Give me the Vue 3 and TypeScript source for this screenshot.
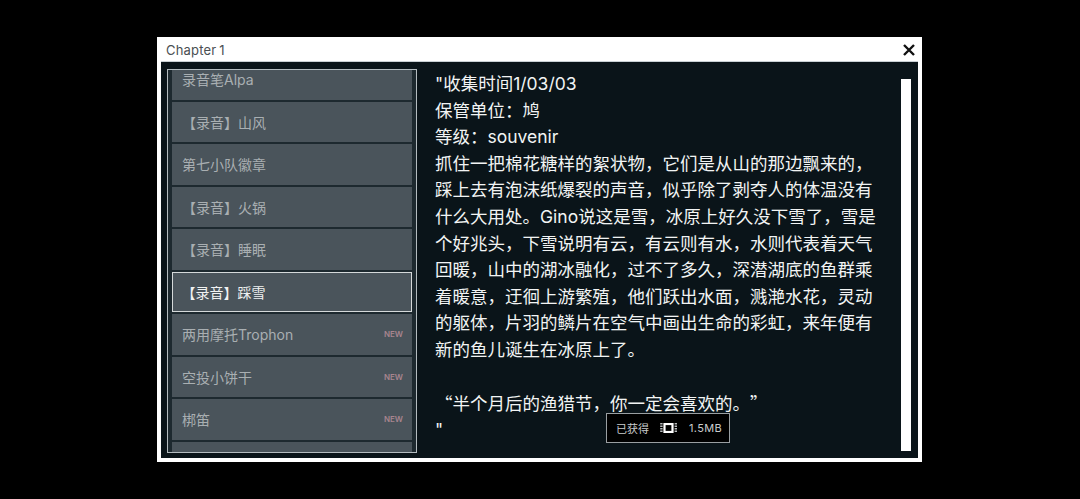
<template>
  <div class="page">
    <div class="window">
      <header class="title-bar">
        <span class="title">Chapter 1</span>
        <svg class="close" width="14" height="14" viewBox="0 0 14 14">
          <path d="M2 2 L12 12 M12 2 L2 12" stroke="#111" stroke-width="2.4" fill="none" />
        </svg>
      </header>
      <div class="body">
        <aside class="list-frame">
          <ul class="list">
            <li
              v-for="item in items"
              :key="item.name"
              class="item"
              :class="{ selected: item.name === selected }"
            >
              <span class="name">{{ item.name }}</span>
              <span v-if="item.isNew" class="new">NEW</span>
            </li>
          </ul>
        </aside>
        <article class="text-pane">
          <p
            v-for="(line, i) in lines"
            :key="i"
            class="line"
            :class="{ quote: line.startsWith('“') }"
          >{{ line || '\u00a0' }}</p>
        </article>
        <div class="scrollbar"></div>
      </div>
      <div class="toast">
        <span class="toast-label">已获得</span>
        <svg class="chip" width="18" height="10" viewBox="0 0 18 10">
          <rect x="4.5" y="1" width="8" height="8" fill="#000" stroke="#fff" stroke-width="2.2" />
          <path d="M1.4 0 V10 M15.8 0 V10" stroke="#b9bcbd" stroke-width="2.4" stroke-dasharray="1.5 1" />
        </svg>
        <span class="toast-size">1.5MB</span>
      </div>
    </div>
  </div>
</template>

<script setup lang="ts">
interface Item {
  name: string
  isNew?: boolean
}

const selected = '【录音】踩雪'

const items: Item[] = [
  { name: '录音笔Alpa' },
  { name: '【录音】山风' },
  { name: '第七小队徽章' },
  { name: '【录音】火锅' },
  { name: '【录音】睡眠' },
  { name: '【录音】踩雪' },
  { name: '两用摩托Trophon', isNew: true },
  { name: '空投小饼干', isNew: true },
  { name: '梆笛', isNew: true },
  { name: '' }
]

const lines = [
  '"收集时间1/03/03',
  '保管单位：鸠',
  '等级：souvenir',
  '抓住一把棉花糖样的絮状物，它们是从山的那边飘来的，',
  '踩上去有泡沫纸爆裂的声音，似乎除了剥夺人的体温没有',
  '什么大用处。Gino说这是雪，冰原上好久没下雪了，雪是',
  '个好兆头，下雪说明有云，有云则有水，水则代表着天气',
  '回暖，山中的湖冰融化，过不了多久，深潜湖底的鱼群乘',
  '着暖意，迂徊上游繁殖，他们跃出水面，溅滟水花，灵动',
  '的躯体，片羽的鳞片在空气中画出生命的彩虹，来年便有',
  '新的鱼儿诞生在冰原上了。',
  '',
  '“半个月后的渔猎节，你一定会喜欢的。”',
  '"'
]
</script>

<style scoped>
.page {
  width: 1080px;
  height: 499px;
  box-sizing: border-box;
  padding: 37px 158px 37px 157px;
  background: #000;
  font-family: Inter, "Noto Sans CJK SC", sans-serif;
  overflow: hidden;
}

.window {
  position: relative;
  height: 425px;
  box-sizing: border-box;
  display: flex;
  flex-direction: column;
  background: #fff;
  padding: 0 4px 4px;
}

.title-bar {
  height: 25px;
  flex: none;
  display: flex;
  align-items: center;
  justify-content: space-between;
  padding: 1px 2px 0 5px;
  border-bottom: 1px solid #c9d0d4;
  box-sizing: border-box;
}

.title {
  font-size: 13px;
  color: #4a4f53;
  letter-spacing: 0.2px;
  word-spacing: -1px;
}

.close {
  display: block;
}

.body {
  flex: 1;
  min-height: 0;
  display: flex;
  background: #0a1419;
  padding: 7px 7px 5px 6px;
}

.list-frame {
  width: 250px;
  flex: none;
  box-sizing: border-box;
  border: 1px solid #b4bcc0;
  padding: 2px 4px 3px;
  overflow: hidden;
  background: #1d292f;
}

.list {
  list-style: none;
  margin: -13px 0 0;
  padding: 0;
  display: flex;
  flex-direction: column;
  gap: 2px;
}

.item {
  height: 40.5px;
  flex: none;
  box-sizing: border-box;
  display: flex;
  align-items: center;
  justify-content: space-between;
  padding: 0 9px 0 10px;
  background: #4a545b;
  color: #a9afb2;
  font-size: 14px;
}

.item.selected {
  border: 1.5px solid #d5d9da;
  color: #f0f2f2;
  padding: 0 8.5px;
}

.new {
  font-size: 8px;
  color: #a8858f;
  font-weight: 600;
}

.text-pane {
  flex: 1;
  padding: 2px 0 0 18px;
  color: #f2f4f4;
  font-size: 17.5px;
  line-height: 26.6px;
}

.line {
  margin: 0;
  white-space: nowrap;
}

.line.quote {
  font-family: "Noto Sans CJK SC", sans-serif;
  text-spacing-trim: space-all;
}

.scrollbar {
  width: 10px;
  flex: none;
  margin: 10px 0 2px;
  background: #fff;
}

.toast {
  position: absolute;
  left: 449px;
  top: 376px;
  width: 124px;
  height: 30px;
  box-sizing: border-box;
  display: flex;
  align-items: center;
  padding: 0 0 0 9px;
  background: #000;
  border: 1px solid #9a9fa2;
  color: #c9cccd;
  font-size: 11px;
  white-space: nowrap;
}

.toast-label {
  flex: none;
  width: 33px;
}

.chip {
  display: block;
  flex: none;
  margin: 0 11px;
}

.toast-size {
  flex: none;
  letter-spacing: 0.35px;
}
</style>

<style>
html,
body {
  margin: 0;
  background: #000;
}
</style>
